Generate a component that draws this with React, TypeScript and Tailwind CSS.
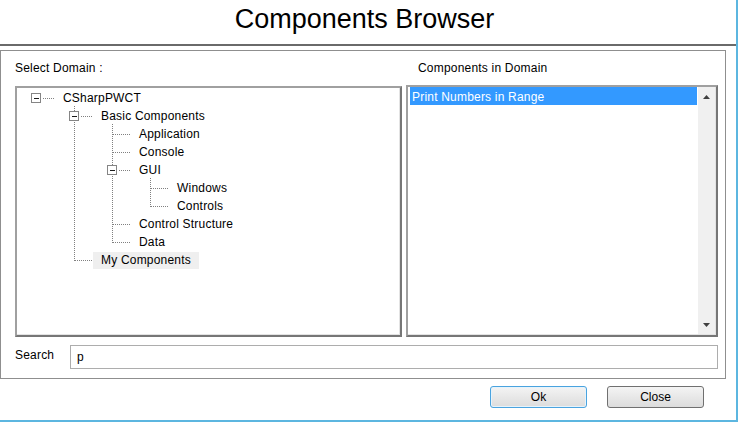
import React from "react";

type Row = { t: string; l: number; box?: boolean; sel?: boolean };

const rows: Row[] = [
  { t: "CSharpPWCT", l: 0, box: true },
  { t: "Basic Components", l: 1, box: true },
  { t: "Application", l: 2 },
  { t: "Console", l: 2 },
  { t: "GUI", l: 2, box: true },
  { t: "Windows", l: 3 },
  { t: "Controls", l: 3 },
  { t: "Control Structure", l: 2 },
  { t: "Data", l: 2 },
  { t: "My Components", l: 1, sel: true },
];

const ml = ["ml-[38px]", "ml-[76px]", "ml-[114px]", "ml-[152px]"];

function TreeLines() {
  const dot = { stroke: "#808080", strokeWidth: 1, strokeDasharray: "1 1" };
  const els: React.ReactNode[] = [];
  const verts = [
    { x: 57.5, y1: 18, y2: 173 },
    { x: 95.5, y1: 36, y2: 155 },
    { x: 133.5, y1: 90, y2: 119 },
  ];
  verts.forEach((v, i) =>
    els.push(<line key={"v" + i} x1={v.x} y1={v.y1} x2={v.x} y2={v.y2} {...dot} />)
  );
  rows.forEach((r, i) => {
    const y = 10.5 + 18 * i;
    const o = 38 * r.l;
    if (r.box) {
      els.push(<line key={"h" + i} x1={26 + o} y1={y} x2={37 + o} y2={y} {...dot} />);
    } else {
      els.push(<line key={"h" + i} x1={20 + o} y1={y} x2={38 + o} y2={y} {...dot} />);
    }
  });
  rows.forEach((r, i) => {
    if (!r.box) return;
    const o = 38 * r.l;
    const y = 5.5 + 18 * i;
    els.push(
      <rect key={"b" + i} x={14.5 + o} y={y} width={9} height={9} fill="#ffffff" stroke="#858585" strokeWidth={1} />
    );
    els.push(
      <line key={"m" + i} x1={17 + o} y1={y + 5} x2={22 + o} y2={y + 5} stroke="#1a1a1a" strokeWidth={1} />
    );
  });
  return (
    <svg className="absolute inset-0 pointer-events-none" width="383" height="247">
      {els}
    </svg>
  );
}

export default function App() {
  return (
    <div className="w-[738px] h-[422px] bg-white border-r-2 border-b-2 border-[#5cb6e0] font-['Liberation_Sans',Arial,sans-serif] text-black flex flex-col">
      <div className="h-[44px] flex items-center justify-center pr-[7px] pb-[6px]">
        <span className="text-[27px] leading-[31px]">Components Browser</span>
      </div>
      <div className="h-[2px] bg-[#6a6a6a]" />
      <div className="mt-[4px] w-[726px] border border-[#8f8f8f] pt-[10px] pl-[14px] pr-[7px] pb-[9px]">
        <div className="flex gap-[4px]">
          <div className="w-[387px] flex flex-col">
            <div className="h-[14px] text-[12px] leading-[14px] tracking-[0.2px] mb-[11px]">Select Domain :</div>
            <div className="h-[251px] border-2 border-t-[#a0a0a0] border-l-[#a0a0a0] border-r-[#767676] border-b-[#767676] shadow-[inset_-1px_-1px_0_#e3e3e3] bg-white">
              <div className="relative w-full h-full pt-[1px]">
                <TreeLines />
                {rows.map((r, i) => (
                  <div key={i} className="h-[18px] flex items-start">
                    <span
                      className={
                        "h-[17px] flex items-center pl-[8px] pr-[8px] pb-[1px] text-[12px] leading-[14px] tracking-[0.2px] mt-[1px] " +
                        ml[r.l] +
                        (r.sel ? " bg-[#efefef]" : "")
                      }
                    >
                      {r.t}
                    </span>
                  </div>
                ))}
              </div>
            </div>
          </div>
          <div className="w-[312px] flex flex-col">
            <div className="h-[14px] text-[12px] leading-[14px] tracking-[0.2px] mb-[10px] pl-[12px]">Components in Domain</div>
            <div className="h-[252px] border-2 border-t-[#a0a0a0] border-l-[#a0a0a0] border-r-[#767676] border-b-[#767676] shadow-[inset_-1px_-1px_0_#e3e3e3] bg-white flex pl-[2px] pr-[1px] pb-[1px] gap-[1px]">
              <div className="flex-1 flex flex-col">
                <div className="h-[18px] bg-[#3399ff] text-white text-[12px] leading-[14px] tracking-[0.2px] flex items-center pl-[2px] pt-[1px]">
                  Print Numbers in Range
                </div>
              </div>
              <div className="w-[17px] bg-[#f0f0f0] flex flex-col justify-between">
                <div className="h-[17px] flex items-center justify-center pt-[3px]">
                  <svg width="7" height="4" viewBox="0 0 7 4">
                    <path d="M3.5 0 L7 4 L0 4 Z" fill="#404040" />
                  </svg>
                </div>
                <div className="h-[17px] flex items-center justify-center pb-[2px]">
                  <svg width="7" height="4" viewBox="0 0 7 4">
                    <path d="M0 0 L7 0 L3.5 4 Z" fill="#404040" />
                  </svg>
                </div>
              </div>
            </div>
          </div>
        </div>
        <div className="mt-[8px] flex items-start h-[24px]">
          <div className="w-[55px] text-[12px] leading-[14px] tracking-[0.2px] pt-[3px]">Search</div>
          <div className="w-[648px] h-[24px] border border-[#adadad] flex items-center pl-[6px] text-[12px]">p</div>
        </div>
      </div>
      <div className="mt-[7px] flex gap-[20px] pl-[490px]">
        <div className="w-[97px] h-[22px] rounded-[3px] border border-[#4aa3df] bg-gradient-to-b from-[#f4f4f4] to-[#dcdcdc] shadow-[inset_0_0_0_1px_#e6f3fb] flex items-center justify-center text-[12px]">
          Ok
        </div>
        <div className="w-[97px] h-[22px] rounded-[3px] border border-[#707070] bg-gradient-to-b from-[#f4f4f4] to-[#dcdcdc] flex items-center justify-center text-[12px]">
          Close
        </div>
      </div>
    </div>
  );
}
